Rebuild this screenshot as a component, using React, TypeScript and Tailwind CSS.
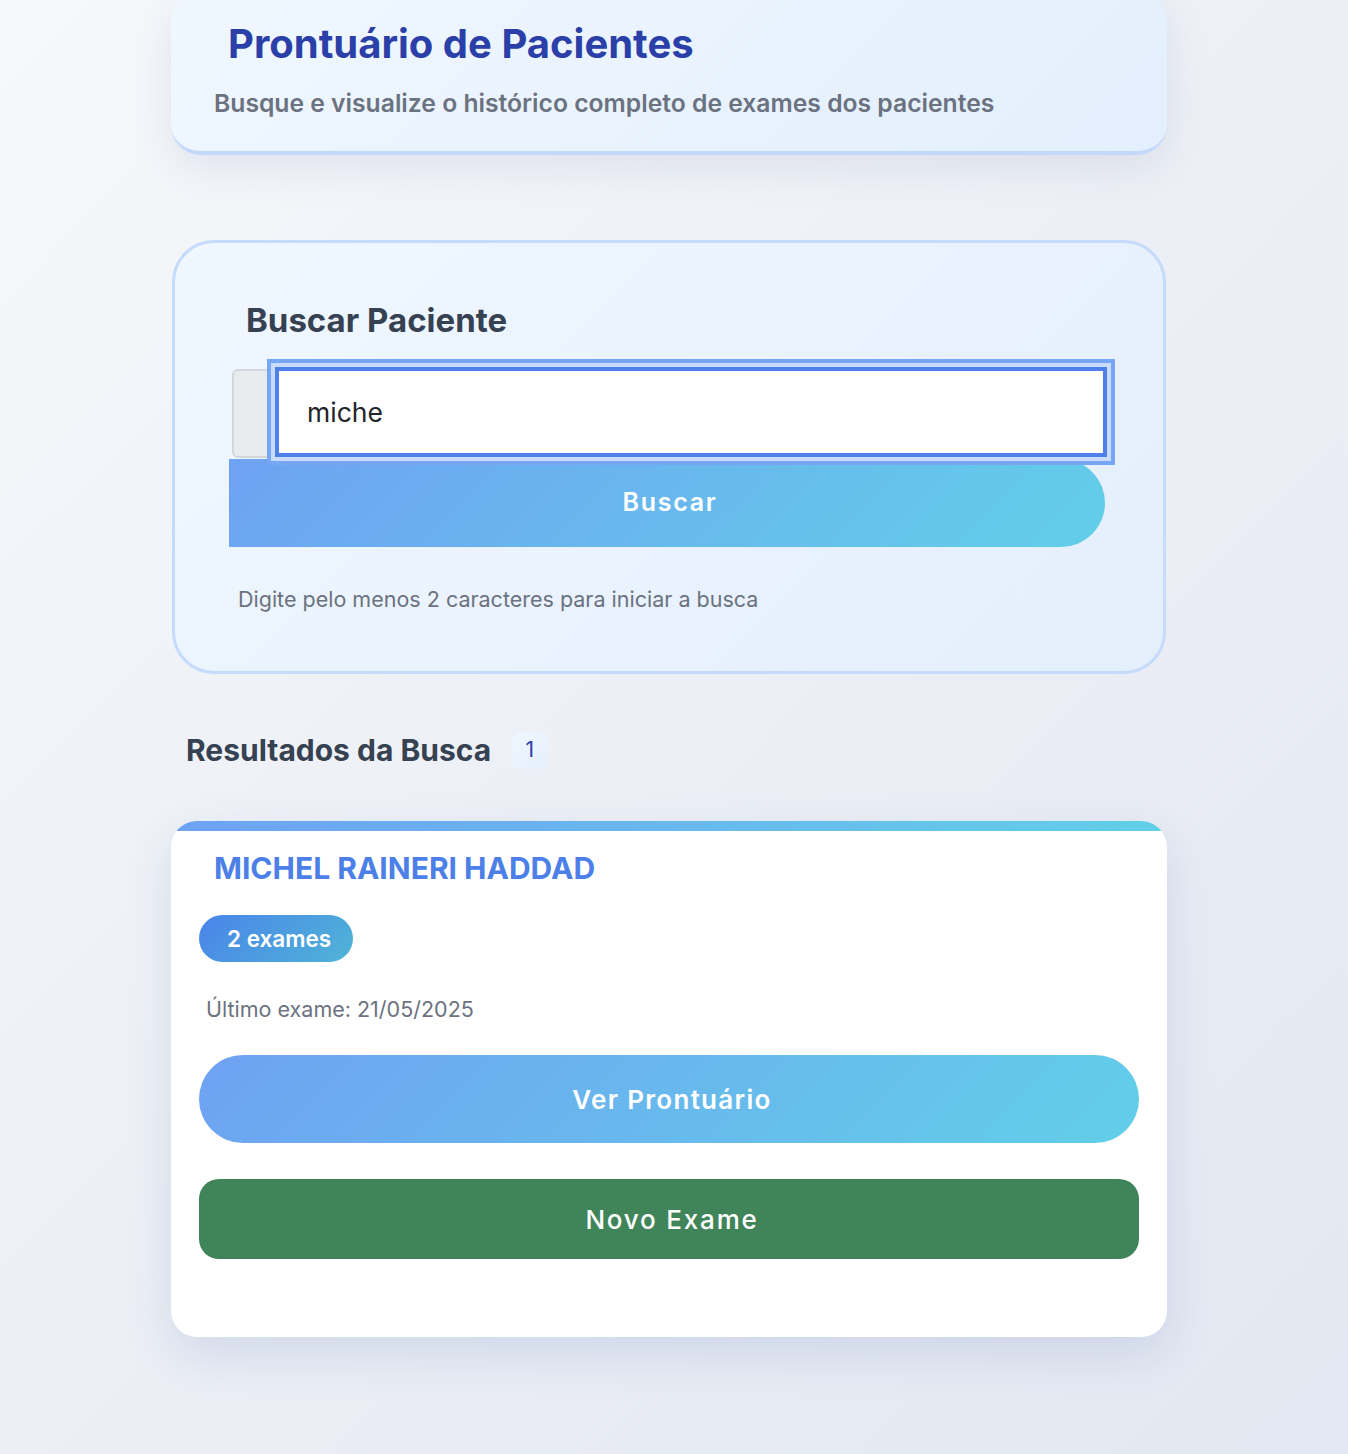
import { useState } from 'react'

const font = { fontFamily: 'Inter, "Noto Sans", sans-serif' }

export default function App() {
  const [query, setQuery] = useState('miche')

  return (
    <div style={font} className="min-h-[1454px] bg-[linear-gradient(135deg,#f6f8fb_0%,#eceff5_50%,#e3e7f1_100%)] overflow-hidden">
      <div className="ml-[171px] w-[996px]">
        {/* Header */}
        <div className="-mt-[9px] rounded-[30px] border-b-4 border-[#c3d9fb] bg-[linear-gradient(135deg,#f0f7ff,#e3effd)] pt-[29px] pb-[32px] shadow-[0_12px_40px_rgba(90,110,160,0.13)]">
          <h1 className="ml-[57px] text-[40px] leading-[48px] font-bold text-[#2b3fa8]">
            Prontuário de Pacientes
          </h1>
          <p className="ml-[43px] mt-[19px] text-[24.7px] leading-[32px] font-semibold text-[#6b7280]">
            Busque e visualize o histórico completo de exames dos pacientes
          </p>
        </div>

        {/* Search */}
        <div className="mt-[85px] ml-px w-[994px] rounded-[42px] border-[3px] border-[#c6dbfb] bg-[linear-gradient(135deg,#f0f7ff,#e4effd)] pl-[54px] pt-[57px] pb-[57px]">
          <h2 className="ml-[17px] text-[33px] leading-[40px] font-bold text-[#364152]">
            Buscar Paciente
          </h2>
          <div className="mt-[27px] ml-[3px] flex h-[90px]">
            <div className="mt-[2px] h-[89px] w-[45px] rounded-l-md border-2 border-[#d3d7dc] bg-[#e9ecef]" />
            <input
              value={query}
              onChange={e => setQuery(e.target.value)}
              className="relative z-10 -ml-[2px] h-[90px] w-[832px] border-4 border-[#4f7fe9] bg-white pl-[28px] text-[26.5px] text-[#212529] outline-none shadow-[0_0_0_4px_#c9dbfa,0_0_0_8px_#76a6f5]"
            />
          </div>
          <button className="mt-[2px] block h-[88px] w-[876px] rounded-r-[44px] bg-[linear-gradient(135deg,#6ea2f2,#62cfe8)] pl-[6px] text-[25px] font-semibold tracking-[1.7px] text-white">
            Buscar
          </button>
          <p className="ml-[9px] mt-[37px] text-[21.5px] leading-[30px] text-[#6b7280]">
            Digite pelo menos 2 caracteres para iniciar a busca
          </p>
        </div>

        {/* Results header */}
        <div className="mt-[57px] ml-[15px] flex h-[38px] items-center gap-[21px]">
          <h3 className="text-[30px] leading-[36px] font-bold text-[#364152]">Resultados da Busca</h3>
          <span className="flex h-[37px] w-[35px] items-center justify-center rounded-lg bg-[linear-gradient(135deg,#eff6ff,#e5f0fd)] text-[21px] text-[#2b3fa8]">
            1
          </span>
        </div>

        {/* Result card */}
        <div className="mt-[52px] overflow-hidden rounded-[26px] bg-white shadow-[0_18px_45px_rgba(80,110,180,0.16)]">
          <div className="h-[10px] bg-[linear-gradient(90deg,#6ea2f2,#62cfe8)]" />
          <div className="px-[28px] pt-[19px] pb-[78px]">
            <h4 className="ml-[15px] text-[30px] leading-[36px] font-bold text-[#4c7fe8]">
              MICHEL RAINERI HADDAD
            </h4>
            <span className="mt-[29px] inline-flex h-[47px] items-center rounded-full bg-[linear-gradient(135deg,#4a84ea,#4fb4d6)] pl-[28px] pr-[22px] text-[22.5px] font-semibold text-white">
              2 exames
            </span>
            <p className="ml-[7px] mt-[32px] text-[21.5px] leading-[30px] text-[#6b7280]">Último exame: 21/05/2025</p>
            <button className="mt-[31px] block h-[88px] w-full rounded-full bg-[linear-gradient(135deg,#6ea2f2,#62cfe8)] pl-[6px] text-[26px] font-semibold tracking-[1.3px] text-white">
              Ver Prontuário
            </button>
            <button className="mt-[36px] block h-[80px] w-full rounded-[20px] bg-[#40855a] pl-[6px] text-[26px] font-medium tracking-[1.8px] text-white">
              Novo Exame
            </button>
          </div>
        </div>
      </div>
    </div>
  )
}
